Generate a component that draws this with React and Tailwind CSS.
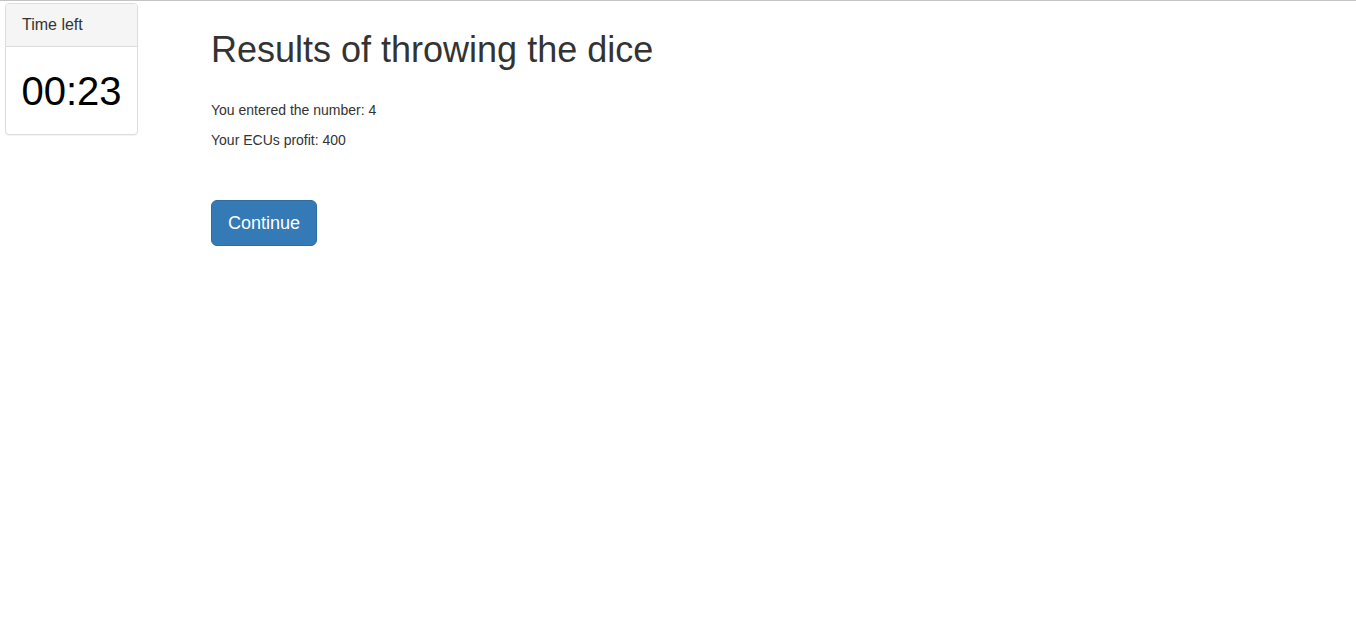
export default function App() {
    return (
        <div className="min-h-[623px] bg-white border-t border-[#c4c4c4] text-[#333]" style={{ fontFamily: '"Liberation Sans", Arial, sans-serif' }}>
            <div className="flex items-start">
                <div className="ml-[5px] mt-[2px] w-[133px] border border-[#ddd] rounded-[4px] shadow-[0_1px_1px_rgba(0,0,0,0.05)] bg-white">
                    <div className="bg-[#f5f5f5] border-b border-[#ddd] px-4 py-[10px] text-[16px] leading-[22px] rounded-t-[3px]">
                        Time left
                    </div>
                    <div className="h-[87px] flex items-center justify-center text-[40px] text-black">
                        00:23
                    </div>
                </div>
                <div className="ml-[73px] pt-[29px]">
                    <h1 className="text-[36px] leading-[40px] font-normal text-[#333]">Results of throwing the dice</h1>
                    <p className="mt-[30px] text-[14px] leading-[20px]">You entered the number: 4</p>
                    <p className="mt-[10px] text-[14px] leading-[20px]">Your ECUs profit: 400</p>
                    <button className="mt-[50px] bg-[#337ab7] border border-[#2e6da4] text-white text-[18px] leading-[24px] px-4 py-[10px] rounded-[6px]">
                        Continue
                    </button>
                </div>
            </div>
        </div>
    );
}
